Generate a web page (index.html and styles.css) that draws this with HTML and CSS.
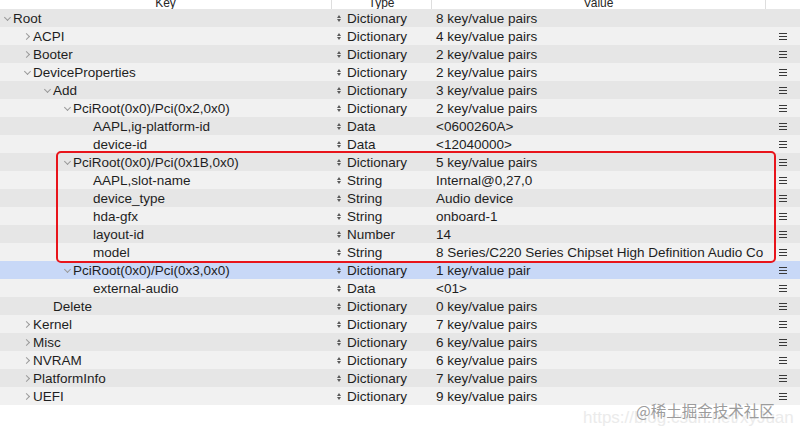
FILE: index.html
```html
<!DOCTYPE html>
<html>
<head>
<meta charset="utf-8">
<link rel="stylesheet" href="styles.css">
</head>
<body>
<div class="plist">
  <div class="header">
    <div class="hcell">Key</div>
    <div class="hcell">Type</div>
    <div class="hcell">Value</div>
    <div class="hcell hlast"></div>
  </div>
  <div class="rows">
    <div class="row odd"><div class="key l0"><span class="chev down"></span>Root</div><div class="type"><span class="pop"></span>Dictionary</div><div class="value">8 key/value pairs</div><div class="menu"></div></div>
    <div class="row"><div class="key l1"><span class="chev right"></span>ACPI</div><div class="type"><span class="pop"></span>Dictionary</div><div class="value">4 key/value pairs</div><div class="menu"><span class="burger"></span></div></div>
    <div class="row odd"><div class="key l1"><span class="chev right"></span>Booter</div><div class="type"><span class="pop"></span>Dictionary</div><div class="value">2 key/value pairs</div><div class="menu"><span class="burger"></span></div></div>
    <div class="row"><div class="key l1"><span class="chev down"></span>DeviceProperties</div><div class="type"><span class="pop"></span>Dictionary</div><div class="value">2 key/value pairs</div><div class="menu"><span class="burger"></span></div></div>
    <div class="row odd"><div class="key l2"><span class="chev down"></span>Add</div><div class="type"><span class="pop"></span>Dictionary</div><div class="value">3 key/value pairs</div><div class="menu"><span class="burger"></span></div></div>
    <div class="row"><div class="key l3"><span class="chev down"></span>PciRoot(0x0)/Pci(0x2,0x0)</div><div class="type"><span class="pop"></span>Dictionary</div><div class="value">2 key/value pairs</div><div class="menu"><span class="burger"></span></div></div>
    <div class="row odd"><div class="key l4"><span class="chev"></span>AAPL,ig-platform-id</div><div class="type"><span class="pop"></span>Data</div><div class="value">&lt;0600260A&gt;</div><div class="menu"><span class="burger"></span></div></div>
    <div class="row"><div class="key l4"><span class="chev"></span>device-id</div><div class="type"><span class="pop"></span>Data</div><div class="value">&lt;12040000&gt;</div><div class="menu"><span class="burger"></span></div></div>
    <div class="row odd"><div class="key l3"><span class="chev down"></span>PciRoot(0x0)/Pci(0x1B,0x0)</div><div class="type"><span class="pop"></span>Dictionary</div><div class="value">5 key/value pairs</div><div class="menu"><span class="burger"></span></div></div>
    <div class="row"><div class="key l4"><span class="chev"></span>AAPL,slot-name</div><div class="type"><span class="pop"></span>String</div><div class="value">Internal@0,27,0</div><div class="menu"><span class="burger"></span></div></div>
    <div class="row odd"><div class="key l4"><span class="chev"></span>device_type</div><div class="type"><span class="pop"></span>String</div><div class="value">Audio device</div><div class="menu"><span class="burger"></span></div></div>
    <div class="row"><div class="key l4"><span class="chev"></span>hda-gfx</div><div class="type"><span class="pop"></span>String</div><div class="value">onboard-1</div><div class="menu"><span class="burger"></span></div></div>
    <div class="row odd"><div class="key l4"><span class="chev"></span>layout-id</div><div class="type"><span class="pop"></span>Number</div><div class="value">14</div><div class="menu"><span class="burger"></span></div></div>
    <div class="row"><div class="key l4"><span class="chev"></span>model</div><div class="type"><span class="pop"></span>String</div><div class="value">8 Series/C220 Series Chipset High Definition Audio Co</div><div class="menu"><span class="burger"></span></div></div>
    <div class="row selected"><div class="key l3"><span class="chev down"></span>PciRoot(0x0)/Pci(0x3,0x0)</div><div class="type"><span class="pop"></span>Dictionary</div><div class="value">1 key/value pair</div><div class="menu"><span class="burger"></span></div></div>
    <div class="row"><div class="key l4"><span class="chev"></span>external-audio</div><div class="type"><span class="pop"></span>Data</div><div class="value">&lt;01&gt;</div><div class="menu"><span class="burger"></span></div></div>
    <div class="row odd"><div class="key l2"><span class="chev"></span>Delete</div><div class="type"><span class="pop"></span>Dictionary</div><div class="value">0 key/value pairs</div><div class="menu"><span class="burger"></span></div></div>
    <div class="row"><div class="key l1"><span class="chev right"></span>Kernel</div><div class="type"><span class="pop"></span>Dictionary</div><div class="value">7 key/value pairs</div><div class="menu"><span class="burger"></span></div></div>
    <div class="row odd"><div class="key l1"><span class="chev right"></span>Misc</div><div class="type"><span class="pop"></span>Dictionary</div><div class="value">6 key/value pairs</div><div class="menu"><span class="burger"></span></div></div>
    <div class="row"><div class="key l1"><span class="chev right"></span>NVRAM</div><div class="type"><span class="pop"></span>Dictionary</div><div class="value">6 key/value pairs</div><div class="menu"><span class="burger"></span></div></div>
    <div class="row odd"><div class="key l1"><span class="chev right"></span>PlatformInfo</div><div class="type"><span class="pop"></span>Dictionary</div><div class="value">7 key/value pairs</div><div class="menu"><span class="burger"></span></div></div>
    <div class="row"><div class="key l1"><span class="chev right"></span>UEFI</div><div class="type"><span class="pop"></span>Dictionary</div><div class="value">9 key/value pairs</div><div class="menu"><span class="burger"></span></div></div>
    <div class="highlight"></div>
  </div>
  <div class="watermark">
    <span class="wm-url">https://blog.csdn.net/xyJuan</span>
    <span class="wm-text">@稀土掘金技术社区</span>
  </div>
</div>
</body>
</html>
```

FILE: styles.css
```css
* { box-sizing: border-box; }
html, body {
  margin: 0;
  padding: 0;
  background: #ffffff;
}
body {
  width: 800px;
  height: 437px;
  overflow: hidden;
  font-family: "Liberation Sans", Arial, sans-serif;
  font-size: 13.5px;
  color: #1e1e1e;
}
.plist {
  position: relative;
  width: 800px;
  height: 437px;
}
.header {
  display: grid;
  grid-template-columns: 332px 100px 334px 34px;
  height: 9px;
  overflow: hidden;
  background: #ffffff;
}
.hcell {
  height: 9px;
  line-height: 7px;
  font-size: 12px;
  text-align: center;
  color: #262626;
  border-right: 1px solid #dedede;
  overflow: hidden;
}
.hcell.hlast { border-right: none; }
.rows {
  position: relative;
}
.row {
  display: grid;
  grid-template-columns: 332px 100px 334px 34px;
  height: 18px;
  line-height: 19px;
  background: #f1f1f1;
  white-space: nowrap;
}
.row.odd { background: #e6e6e6; }
.row.selected { background: #c8d8f7; }
.key {
  display: flex;
  align-items: center;
  overflow: hidden;
}
.key.l0 { padding-left: 3px; }
.key.l1 { padding-left: 23px; }
.key.l2 { padding-left: 43px; }
.key.l3 { padding-left: 63px; }
.key.l4 { padding-left: 83px; }
.chev {
  display: inline-block;
  width: 10px;
  height: 18px;
  flex: none;
  position: relative;
}
.chev.right::before {
  content: "";
  position: absolute;
  left: 1px;
  top: 7px;
  width: 4px;
  height: 4px;
  border-right: 1px solid #9a9a9a;
  border-top: 1px solid #9a9a9a;
  transform: rotate(45deg);
}
.chev.down::before {
  content: "";
  position: absolute;
  left: 2px;
  top: 6px;
  width: 4px;
  height: 4px;
  border-right: 1px solid #9a9a9a;
  border-bottom: 1px solid #9a9a9a;
  transform: rotate(45deg);
}
.type {
  display: flex;
  align-items: center;
  padding-left: 5px;
  overflow: hidden;
}
.pop {
  display: inline-block;
  width: 4px;
  height: 7px;
  margin-right: 6px;
  position: relative;
  flex: none;
}
.pop::before, .pop::after {
  content: "";
  position: absolute;
  left: 0;
  border-left: 2px solid transparent;
  border-right: 2px solid transparent;
}
.pop::before { top: 0; border-bottom: 3px solid #5a5a5a; }
.pop::after { bottom: 0; border-top: 3px solid #5a5a5a; }
.value {
  padding-left: 4px;
  overflow: hidden;
}
.menu {
  display: flex;
  align-items: center;
  padding-left: 13px;
}
.burger {
  display: block;
  width: 8px;
  height: 7px;
  border-top: 1px solid #3a3a3a;
  border-bottom: 1px solid #3a3a3a;
  position: relative;
}
.burger::before {
  content: "";
  position: absolute;
  left: 0;
  right: 0;
  top: 2px;
  border-top: 1px solid #3a3a3a;
}
.highlight {
  position: absolute;
  left: 56px;
  top: 142px;
  width: 720px;
  height: 112px;
  border: 2px solid #e8141b;
  border-radius: 5px;
  pointer-events: none;
}
.watermark {
  position: absolute;
  left: 580px;
  top: 398px;
  width: 220px;
  height: 30px;
}
.wm-url {
  position: absolute;
  left: 3px;
  top: 10px;
  font-size: 17px;
  color: #ebebeb;
  white-space: nowrap;
}
.wm-text {
  position: absolute;
  left: 56px;
  top: 2px;
  font-family: "Noto Sans CJK SC", sans-serif;
  font-size: 15.5px;
  line-height: 20px;
  color: #9c9c9c;
  white-space: nowrap;
}
```
